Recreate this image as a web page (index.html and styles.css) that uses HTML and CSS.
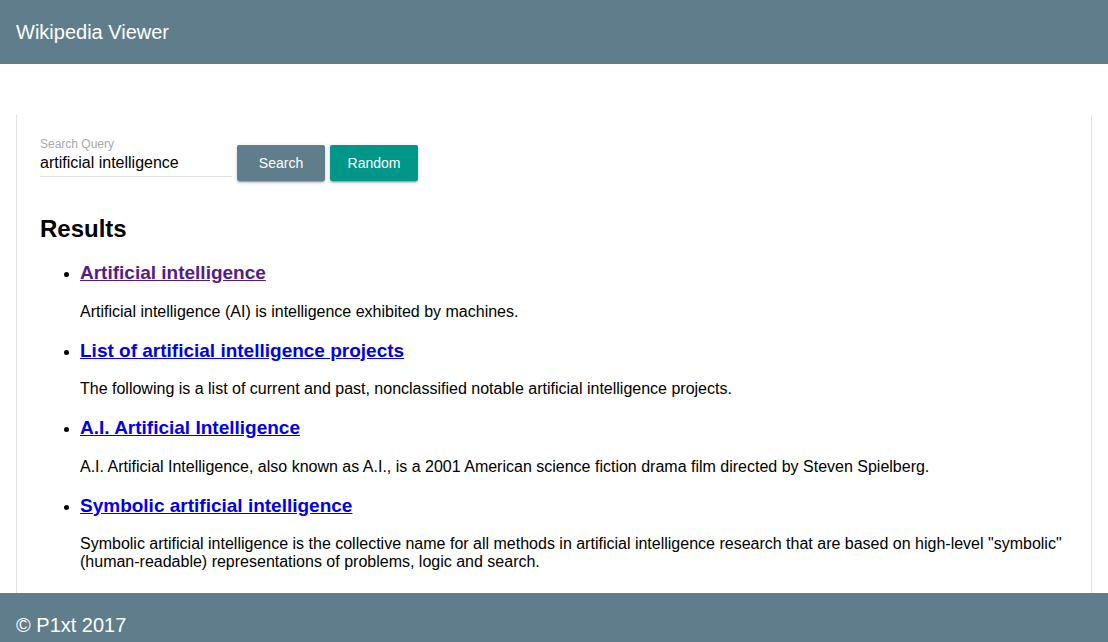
FILE: index.html
```html
<!DOCTYPE html>
<html>
<head>
<meta charset="utf-8">
<title>Wikipedia Viewer</title>
<link rel="stylesheet" href="styles.css">
</head>
<body>
<div class="layout">
  <header class="app-header">Wikipedia Viewer</header>
  <main class="app-main">
    <section class="card">
      <form class="search-row">
        <div class="field">
          <label class="field-label">Search Query</label>
          <input class="field-input" type="text" value="artificial intelligence">
        </div>
        <button type="button" class="btn btn-search">Search</button>
        <button type="button" class="btn btn-random">Random</button>
      </form>
      <h2 class="results-title">Results</h2>
      <ul class="results">
        <li>
          <h3 class="result-title"><a class="visited" href="#">Artificial intelligence</a></h3>
          <p class="result-text">Artificial intelligence (AI) is intelligence exhibited by machines.</p>
        </li>
        <li>
          <h3 class="result-title"><a href="#">List of artificial intelligence projects</a></h3>
          <p class="result-text">The following is a list of current and past, nonclassified notable artificial intelligence projects.</p>
        </li>
        <li>
          <h3 class="result-title"><a href="#">A.I. Artificial Intelligence</a></h3>
          <p class="result-text">A.I. Artificial Intelligence, also known as A.I., is a 2001 American science fiction drama film directed by Steven Spielberg.</p>
        </li>
        <li>
          <h3 class="result-title"><a href="#">Symbolic artificial intelligence</a></h3>
          <p class="result-text">Symbolic artificial intelligence is the collective name for all methods in artificial intelligence research that are based on high-level "symbolic" (human-readable) representations of problems, logic and search.</p>
        </li>
      </ul>
    </section>
  </main>
  <footer class="app-footer">© P1xt 2017</footer>
</div>
</body>
</html>
```

FILE: styles.css
```css
* { box-sizing: border-box; }
html, body { margin: 0; padding: 0; height: 100%; }
body {
  font-family: "Liberation Sans", Arial, sans-serif;
  color: #000;
  background: #fff;
}
.layout {
  display: flex;
  flex-direction: column;
  height: 100vh;
  overflow: hidden;
}
.app-header {
  flex: 0 0 64px;
  height: 64px;
  background: #607d8b;
  color: #fff;
  font-size: 20px;
  display: flex;
  align-items: center;
  padding-left: 16px;
}
.app-main {
  flex: 1 1 auto;
  overflow: hidden;
  padding: 51px 16px 0;
}
.card {
  background: #fff;
  padding: 0 23px 24px;
  min-height: 600px;
  border-left: 1px solid #e2e2e2;
  border-right: 1px solid #e2e2e2;
}
.search-row {
  display: flex;
  align-items: flex-start;
  padding-top: 22px;
  padding-bottom: 14px;
  margin: 0;
}
.field {
  display: flex;
  flex-direction: column;
  width: 192px;
}
.field-label {
  font-size: 12px;
  line-height: 14px;
  color: #a8a8a8;
}
.field-input {
  font-family: "Liberation Sans", Arial, sans-serif;
  font-size: 16px;
  line-height: 20px;
  height: 26px;
  padding: 2px 0 3px;
  border: none;
  border-bottom: 1px solid rgba(0,0,0,.12);
  outline: none;
  color: #000;
  background: transparent;
  width: 100%;
}
.btn {
  margin-top: 8px;
  margin-left: 5px;
  height: 36px;
  width: 88px;
  border: none;
  border-radius: 2px;
  color: #fff;
  font-family: "Liberation Sans", Arial, sans-serif;
  font-size: 14px;
  box-shadow: 0 2px 2px 0 rgba(0,0,0,.14), 0 3px 1px -2px rgba(0,0,0,.2), 0 1px 5px 0 rgba(0,0,0,.12);
  cursor: pointer;
}
.btn-search { background: #607d8b; }
.btn-random { background: #009688; }
.results-title {
  font-size: 24px;
  font-weight: bold;
  margin: 20px 0 19px;
}
.results {
  margin: 16px 0;
  padding-left: 40px;
}
.result-title {
  font-size: 19px;
  font-weight: bold;
  margin: 18.75px 0;
}
.result-title a { color: #0000ee; text-decoration: underline; }
.result-title a.visited { color: #551a8b; }
.result-text {
  font-size: 16px;
  margin: 16px 0;
}
.app-footer {
  flex: 0 0 49px;
  height: 49px;
  background: #607d8b;
  color: #fff;
  font-size: 20px;
  padding: 21px 0 0 16px;
  line-height: 23px;
}
```
